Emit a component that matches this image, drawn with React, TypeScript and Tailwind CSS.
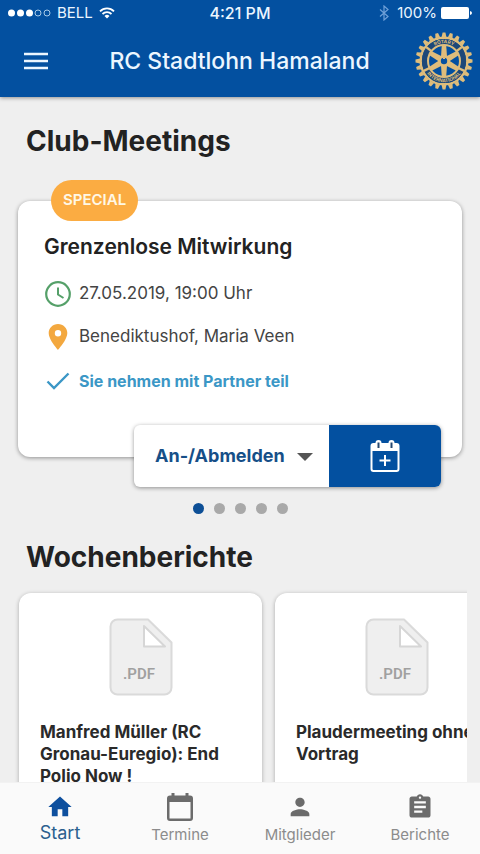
import { useState } from "react";
import { MdAssignment, MdHome, MdPerson } from "react-icons/md";

const ROTARY_BLUE = "#0350a0";
const ROTARY_GOLD = "#dfbd7b";

function StatusBar() {
  return (
    <div className="grid h-[26px] grid-cols-3 items-center px-2 text-[15px]">
      <div className="flex items-center gap-1.5">
        <svg width="43" height="8" viewBox="0 0 43 8" fill="none" aria-hidden="true">
          <circle cx="3.5" cy="4" r="3.5" fill="white" />
          <circle cx="12.5" cy="4" r="3.5" fill="white" />
          <circle cx="21.5" cy="4" r="3.5" fill="white" />
          <circle cx="30" cy="4" r="3" stroke="#a9cbe8" />
          <circle cx="39" cy="4" r="3" stroke="#a9cbe8" />
        </svg>
        <span>BELL</span>
        <svg width="16" height="12" viewBox="0 0 16 12" fill="none" aria-hidden="true">
          <path d="M1 4.3A10 10 0 0 1 15 4.3" stroke="white" strokeWidth="1.8" />
          <path d="M3.5 7A6.5 6.5 0 0 1 12.5 7" stroke="white" strokeWidth="1.8" />
          <path d="M5.5 9A3.6 3.6 0 0 1 10.5 9L8 11.6Z" fill="white" />
        </svg>
      </div>
      <span className="text-center text-base font-medium">4:21 PM</span>
      <div className="flex items-center justify-end gap-2">
        <svg width="10" height="16" viewBox="0 0 10 16" fill="none" stroke="#6fa0d8" strokeWidth="1.2" aria-hidden="true">
          <path d="M1 4.5 9 11.5 5 15V1L9 4.5 1 11.5" />
        </svg>
        <span>100%</span>
        <svg className="-ml-1" width="31" height="12" viewBox="0 0 31 12" aria-hidden="true">
          <rect width="28" height="12" rx="2" fill="white" />
          <path d="M29 4Q31 4.500 31 6T29 8Z" fill="white" />
        </svg>
      </div>
    </div>
  );
}

function RotaryWheel() {
  const teeth = Array.from({ length: 24 }, (_, i) => i * 15);
  const spokes = [0, 60, 120, 180, 240, 300];
  return (
    <svg className="shrink-0" width="58" height="58" viewBox="-29 -29 58 58" role="img" aria-label="Rotary International">
      {teeth.map((a) => (
        <path key={a} d="M-2.400 -24 L-1.400 -28.500 H1.400 L2.400 -24Z" fill={ROTARY_GOLD} transform={`rotate(${a})`} />
      ))}
      <circle r="23.300" fill="none" stroke={ROTARY_GOLD} strokeWidth="2.400" />
      <circle r="19.500" fill="none" stroke="#1d4878" strokeWidth="5.200" />
      <circle r="16" fill={ROTARY_BLUE} stroke={ROTARY_GOLD} strokeWidth="2" />
      {[-52, 52, 116, 244].map((a) => (
        <path key={a} d="M-1.200 -22.500H1.200V-16H-1.200Z" fill={ROTARY_GOLD} transform={`rotate(${a})`} />
      ))}
      <defs>
        <path id="wheel-top" d="M-17.800 0A17.800 17.800 0 0 1 17.800 0" />
        <path id="wheel-bottom" d="M-21.200 0A21.200 21.200 0 0 0 21.200 0" />
      </defs>
      <g fill={ROTARY_GOLD} fontSize="4.800" fontWeight="700" textAnchor="middle">
        <text><textPath href="#wheel-top" startOffset="50%">ROTARY</textPath></text>
        <text><textPath href="#wheel-bottom" startOffset="50%">INTERNATIONAL</textPath></text>
      </g>
      {spokes.map((a) => (
        <path key={a} d="M-3.300 0 L-2.200 -16H2.200L3.300 0Z" fill={ROTARY_GOLD} transform={`rotate(${a})`} />
      ))}
      <circle r="6" fill={ROTARY_GOLD} />
      <circle r="3.200" fill={ROTARY_BLUE} />
      <path d="M-1 -3.500H1V-2H-1Z" fill={ROTARY_GOLD} />
    </svg>
  );
}

function ClockIcon() {
  return (
    <svg width="26" height="26" viewBox="0 0 26 26" fill="none" stroke="#55a069" aria-hidden="true">
      <circle cx="13" cy="13" r="11.800" strokeWidth="2.200" />
      <path d="M13 6.500V13.500L18.500 17" strokeWidth="2" />
    </svg>
  );
}

function PinIcon() {
  return (
    <svg width="26" height="26" viewBox="0 0 26 26" aria-hidden="true">
      <path
        fill="#f3a83f"
        fillRule="evenodd"
        d="M13 0C7.800 0 3.700 4 3.700 9.100 3.700 16 13 26 13 26S22.300 16 22.300 9.100C22.300 4 18.200 0 13 0ZM13 12.400A3.200 3.200 0 1 1 13 6 3.200 3.200 0 0 1 13 12.400Z"
      />
    </svg>
  );
}

function CheckIcon() {
  return (
    <svg width="26" height="26" viewBox="0 0 26 26" fill="none" stroke="#3b97c6" strokeWidth="2.400" aria-hidden="true">
      <path d="M2.500 13.500 9 20 23.500 5.500" />
    </svg>
  );
}

function CalendarPlusIcon() {
  return (
    <svg width="30" height="32" viewBox="0 0 30 32" fill="none" aria-hidden="true">
      <rect x="1.500" y="4" width="27" height="27" rx="2" stroke="white" strokeWidth="2" />
      <path d="M1.500 4H28.500V11H1.500Z" fill="white" />
      <rect x="5.500" y="0" width="6" height="9" rx="3" fill="white" />
      <rect x="18.500" y="0" width="6" height="9" rx="3" fill="white" />
      <path d="M8.500 2.500V8M21.500 2.500V8" stroke="#24476f" strokeWidth="2" />
      <path d="M15 15V26M9.500 20.500H20.500" stroke="white" strokeWidth="2" />
    </svg>
  );
}

function CalendarIcon({ className }: { className?: string }) {
  return (
    <svg className={className} viewBox="0 0 28 28" fill="currentColor" aria-hidden="true">
      <path
        fillRule="evenodd"
        d="M24 2.500H22.500V0H19.500V2.500H8.500V0H5.500V2.500H4A3 3 0 0 0 1 5.500V25A3 3 0 0 0 4 28H24A3 3 0 0 0 27 25V5.500A3 3 0 0 0 24 2.500ZM24.500 25.500H3.500V9H24.500Z"
      />
    </svg>
  );
}

function PdfIcon() {
  return (
    <svg width="64" height="78" viewBox="0 0 64 78" aria-label="PDF" role="img">
      <path
        d="M8.500 1.500H39L62.500 24.500V69.500A7 7 0 0 1 55.500 76.500H8.500A7 7 0 0 1 1.500 69.500V8.500A7 7 0 0 1 8.500 1.500Z"
        fill="#efefef"
        stroke="#dadada"
        strokeWidth="2"
        strokeLinejoin="round"
      />
      <path d="M35 8V28.500H56Z" fill="white" stroke="#d6d6d6" strokeWidth="2" strokeLinejoin="round" />
      <text x="30" y="61" textAnchor="middle" fill="#a0a0a0" className="font-['Roboto',sans-serif] text-[15px] font-semibold">
        .PDF
      </text>
    </svg>
  );
}

function MeetingCard() {
  return (
    <section>
      <article className="relative mx-[18px] h-64 rounded-xl bg-white px-[26px] pt-[33px] shadow-[0_1px_4px_rgba(0,0,0,0.4)]">
        <span className="absolute -top-[21px] left-[33px] flex h-[41px] items-center rounded-full bg-[#fbac42] px-3 text-[15px] font-semibold text-[#fff8e6]">
          SPECIAL
        </span>
        <h2 className="text-[21px] leading-[26px] font-semibold text-[#222]">Grenzenlose Mitwirkung</h2>
        <ul className="mt-3 text-[17px] text-[#444]">
          <li className="flex h-[43px] items-center gap-2 pl-px">
            <ClockIcon />
            27.05.2019, 19:00 Uhr
          </li>
          <li className="flex h-11 items-center gap-2 pl-px">
            <PinIcon />
            Benediktushof, Maria Veen
          </li>
          <li className="flex h-[43px] items-center gap-2 pl-px text-base font-bold text-[#3b97c6]">
            <CheckIcon />
            Sie nehmen mit Partner teil
          </li>
        </ul>
      </article>
      <div className="relative -mt-8 mr-[39px] ml-auto flex h-[62px] w-[307px] overflow-hidden rounded-md bg-white shadow-[0_1px_4px_rgba(0,0,0,0.4)]">
        <div className="relative flex-1">
          <select
            aria-label="Teilnahme"
            defaultValue="default"
            className="h-full w-full appearance-none bg-transparent pl-[21px] text-lg font-bold text-[#164f88] outline-none"
          >
            <option value="default">An-/Abmelden</option>
            <option value="in">Anmelden</option>
            <option value="out">Abmelden</option>
          </select>
          <svg className="pointer-events-none absolute top-7 right-4" width="16" height="8" viewBox="0 0 16 8" aria-hidden="true">
            <path d="M0 0H16L8 8Z" fill="#555" />
          </svg>
        </div>
        <button aria-label="Zum Kalender hinzufügen" className="flex w-28 items-center justify-center bg-[#0350a0]">
          <CalendarPlusIcon />
        </button>
      </div>
    </section>
  );
}

function PageDots() {
  const [active, setActive] = useState(0);
  return (
    <div className="mt-4 flex justify-center gap-2.5">
      {[0, 1, 2, 3, 4].map((i) => (
        <button
          key={i}
          aria-label={`Meeting ${i + 1}`}
          onClick={() => setActive(i)}
          className={i === active ? "size-[11px] rounded-full bg-[#0d4f96]" : "size-[11px] rounded-full bg-[#a9a9a9]"}
        />
      ))}
    </div>
  );
}

function ReportCard({ title }: { title: string }) {
  return (
    <article className="flex h-60 w-[243px] shrink-0 flex-col items-center rounded-xl bg-white px-[21px] pt-[25px] shadow-[0_1px_4px_rgba(0,0,0,0.3)]">
      <PdfIcon />
      <h2 className="mt-[25px] w-full text-[17px] leading-[22px] font-bold text-[#2a2a2a]">{title}</h2>
    </article>
  );
}

const tabs = [
  { label: "Start", Icon: MdHome },
  { label: "Termine", Icon: CalendarIcon },
  { label: "Mitglieder", Icon: MdPerson },
  { label: "Berichte", Icon: MdAssignment },
];

export default function App() {
  return (
    <div className="flex h-screen flex-col bg-[#efefef] font-['Inter','Liberation_Sans',sans-serif]">
      <header className="z-10 bg-[#0350a0] pb-[7px] text-[#ecf6ff] shadow-[0_1px_4px_rgba(0,0,0,0.4)]">
        <StatusBar />
        <div className="mt-1.5 flex items-center justify-between pr-[7px] pl-6">
          <button aria-label="Menü">
            <svg width="24" height="18" viewBox="0 0 24 18" stroke="currentColor" strokeWidth="2.500" aria-hidden="true">
              <path d="M0 2H24M0 9H24M0 16H24" />
            </svg>
          </button>
          <h1 className="pl-4 text-[23px] leading-[30px] font-medium">RC Stadtlohn Hamaland</h1>
          <RotaryWheel />
        </div>
      </header>

      <main className="min-h-0 flex-1 overflow-hidden">
        <h2 className="mt-[26px] mb-[42px] pl-[26px] text-[28px] leading-9 font-bold text-[#222]">Club-Meetings</h2>
        <MeetingCard />
        <PageDots />
        <h2 className="mt-[25px] pl-[26px] text-[28px] leading-9 font-bold text-[#222]">Wochenberichte</h2>
        <div className="mr-[13px] flex gap-[13px] overflow-hidden pt-[18px] pl-[19px]">
          <ReportCard title="Manfred Müller (RC Gronau-Euregio): End Polio Now !" />
          <ReportCard title="Plaudermeeting ohne Vortrag" />
        </div>
      </main>

      <nav className="grid h-[72px] shrink-0 grid-cols-4 border-t border-[#f2f2f2] bg-[#fafafa]">
        {tabs.map(({ label, Icon }, i) => (
          <a
            key={label}
            href="#"
            aria-current={i === 0 ? "page" : undefined}
            className={
              i === 0
                ? "flex flex-col items-center gap-0.5 pt-2.5 text-lg leading-5 text-[#2b608e]"
                : "flex flex-col items-center gap-0.5 pt-2.5 text-[15px] leading-6 text-[#8c8c8c]"
            }
          >
            <Icon className={i === 0 ? "size-7 text-[#0d4f9e]" : "size-7 text-[#6b6b6b]"} />
            {label}
          </a>
        ))}
      </nav>
    </div>
  );
}
